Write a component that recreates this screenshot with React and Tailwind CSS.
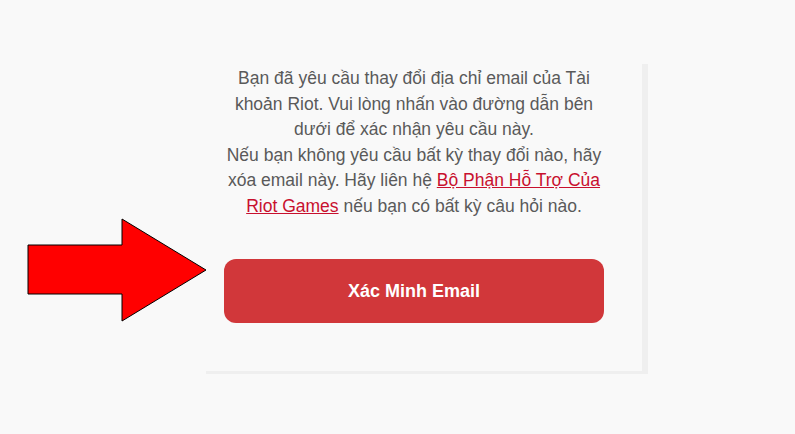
export default function App() {
  return (
    <div className="relative w-[795px] h-[434px] overflow-hidden bg-[#f9f9f9] font-['Liberation_Sans',Arial,sans-serif]">
      <div className="pt-[64px] pl-[206px]">
        <div className="w-[442px] border-r-[6px] border-b-[3px] border-[#efefef] pl-[18px] pr-[38px] pt-[2px] pb-[48px]">
          <p className="text-[17.5px] leading-[25.5px] text-[#5a5a5a] text-center">
            Bạn đã yêu cầu thay đổi địa chỉ email của Tài khoản Riot. Vui lòng nhấn vào đường dẫn bên dưới để xác nhận yêu cầu này.
            <br />
            Nếu bạn không yêu cầu bất kỳ thay đổi nào, hãy xóa email này. Hãy liên hệ{' '}
            <a href="#" className="text-[#c8102e] underline">Bộ Phận Hỗ Trợ Của Riot Games</a>{' '}
            nếu bạn có bất kỳ câu hỏi nào.
          </p>
          <div className="mt-[40px] h-[64px] w-[380px] rounded-[12px] bg-[#d1373a] flex items-center justify-center">
            <span className="text-white font-bold text-[18px]">Xác Minh Email</span>
          </div>
        </div>
      </div>

      <svg className="absolute left-0 top-0" width="260" height="340" viewBox="0 0 260 340">
        <polygon
          points="28,245 122,245 122,219 206,270 122,321 122,294 28,294"
          fill="#ff0000"
          stroke="#000000"
          strokeWidth="1"
        />
      </svg>
    </div>
  );
}
